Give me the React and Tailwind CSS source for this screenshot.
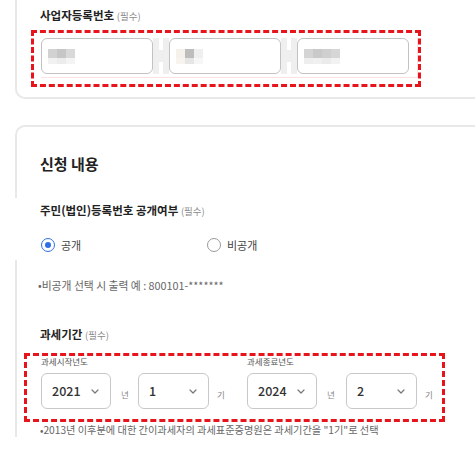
import React from "react";

const FONT = { fontFamily: '"Noto Sans CJK KR", "Noto Sans", sans-serif' };

// mosaic blur that hides the masked business number
const Mosaic = ({ top, bottom }) => (
  <div className="flex flex-col">
    <div className="flex">
      {top.map((c, i) => <div key={i} className="w-[9px] h-[9px]" style={{ backgroundColor: c }} />)}
    </div>
    <div className="flex">
      {bottom.map((c, i) => <div key={i} className="w-[9px] h-[6px]" style={{ backgroundColor: c }} />)}
    </div>
  </div>
);

const Separator = () => (
  <div className="w-4 h-9 flex items-center">
    <div className="w-[6px] h-full bg-[#efefef]" />
    <div className="w-1 h-3 bg-[#efefef]" />
    <div className="w-[6px] h-full bg-[#efefef]" />
  </div>
);

const NumBox = ({ children }) => (
  <div className="w-[112px] h-9 rounded-[6px] border-[1.5px] border-[#c2c2c2] bg-white flex items-center pl-[6px]">
    {children}
  </div>
);

const Chevron = () => (
  <svg width="8" height="5" viewBox="0 0 8 5" fill="none">
    <path d="M1 1l3 3 3-3" stroke="#777" strokeWidth="1.2" strokeLinecap="round" strokeLinejoin="round" />
  </svg>
);

const Select = ({ value, w }) => (
  <div className={`${w} h-9 rounded-[6px] border-[1.5px] border-[#c8c8c8] flex items-center justify-between pl-[10px] pr-[11px]`}>
    <span className="text-[12.5px] font-medium text-[#333] leading-none">{value}</span>
    <Chevron />
  </div>
);

const Unit = ({ children }) => (
  <span className="text-[8.5px] text-[#888] leading-none">{children}</span>
);

const Label = ({ children }) => (
  <div className="text-[11.5px] leading-[14px] font-bold text-[#222] whitespace-nowrap">
    {children} <span className="text-[9.5px] font-normal text-[#8a8a8a]">(필수)</span>
  </div>
);

const Radio = ({ checked, label, w }) => (
  <div className={`${w} flex items-center gap-[6px]`}>
    {checked ? (
      <div className="w-[14px] h-[14px] rounded-full border-[1.5px] border-[#2f6fe4] flex items-center justify-center">
        <div className="w-[6px] h-[6px] rounded-full bg-[#2f6fe4]" />
      </div>
    ) : (
      <div className="w-[14px] h-[14px] rounded-full border-[1.5px] border-[#9a9a9a]" />
    )}
    <span className="text-[11px] leading-[14px] text-[#444]">{label}</span>
  </div>
);

export default function App() {
  return (
    <div className="w-[475px] h-[456px] bg-white overflow-hidden" style={FONT}>
      {/* 사업자등록번호 card */}
      <div className="ml-[15px] border-l-2 border-b-2 border-[#e8e8e8] rounded-bl-[10px] pl-[14px] pt-[8px] pb-[10px]">
        <div className="ml-[9px]"><Label>사업자등록번호</Label></div>
        <div className="mt-[7px] w-[390px] border-[3px] border-dashed border-[#e8141b] pt-[5px] pl-[7px] pb-[6px]">
          <div className="w-[377px] border-b border-r border-[#fbe3e3] pb-[3px] flex items-center">
            <NumBox>
              <Mosaic top={["#d2d2d2", "#c6c6c6", "#d9d9d9"]} bottom={["#f1f1f1", "#ececec", "#f4f4f4"]} />
            </NumBox>
            <Separator />
            <NumBox>
              <Mosaic top={["#f6f0ea", "#bdbdbd", "#efefef"]} bottom={["#f7f3ef", "#e6e6e6", "#f6f6f6"]} />
            </NumBox>
            <Separator />
            <NumBox>
              <Mosaic
                top={["#d4d4d4", "#c9c9c9", "#cfcfcf", "#d6d6d6"]}
                bottom={["#eeeeee", "#f0f0f0", "#ebebeb", "#f2f2f2"]}
              />
            </NumBox>
          </div>
        </div>
      </div>

      {/* 신청 내용 card */}
      <div className="mt-[26px] ml-[15px] border-l-2 border-t-2 border-[#e8e8e8] rounded-tl-[10px] pl-[23px] pt-[27px] pb-[24px]">
        <div className="text-[15px] leading-[20px] font-bold text-[#222]">신청 내용</div>
      </div>

      <div className="ml-[15px] border-l-2 border-transparent pl-[23px] pt-[5px] pb-[8px]">
        <Label>주민(법인)등록번호 공개여부</Label>
        <div className="mt-[20px] flex items-center pl-[1px]">
          <Radio checked label="공개" w="w-[166px]" />
          <Radio label="비공개" w="" />
        </div>
      </div>

      <div className="ml-[15px] border-l-2 border-[#e8e8e8] pl-[21px] pt-[18px]">
        <div className="text-[10.8px] leading-[14px] text-[#666] whitespace-nowrap">•비공개 선택 시 출력 예 : 800101-*******</div>
        <div className="mt-[35px] ml-[2px]"><Label>과세기간</Label></div>

        <div className="mt-[11px] -ml-[14px] w-[421px] border-[3px] border-dashed border-[#e8141b] pl-[14px] pb-[10px]">
          <div className="flex">
            <div className="w-[206px]">
              <div className="text-[8.5px] leading-[10px] text-[#555]">과세시작년도</div>
              <div className="mt-[7px] flex items-center">
                <Select value="2021" w="w-[70px]" />
                <div className="w-[27px] pl-[10px]"><Unit>년</Unit></div>
                <Select value="1" w="w-[71px]" />
                <div className="pl-[8px]"><Unit>기</Unit></div>
              </div>
            </div>
            <div>
              <div className="text-[8.5px] leading-[10px] text-[#555]">과세종료년도</div>
              <div className="mt-[7px] flex items-center">
                <Select value="2024" w="w-[70px]" />
                <div className="w-[29px] pl-[10px]"><Unit>년</Unit></div>
                <Select value="2" w="w-[71px]" />
                <div className="pl-[8px]"><Unit>기</Unit></div>
              </div>
            </div>
          </div>
        </div>

        <div className="mt-[1px] ml-[2px] text-[10.2px] leading-[14px] text-[#666] whitespace-nowrap">
          •2013년 이후분에 대한 간이과세자의 과세표준증명원은 과세기간을 "1기"로 선택
        </div>
      </div>
    </div>
  );
}
